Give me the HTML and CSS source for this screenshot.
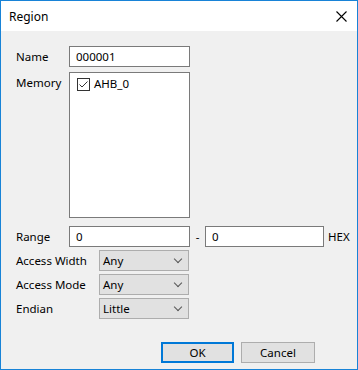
FILE: index.html
```html
<!DOCTYPE html>
<html lang="en">

<head>
    <meta charset="UTF-8">
    <title>Region</title>
    <link rel="stylesheet" href="styles.css">
</head>

<body>
    <div class="dialog">
        <div class="titlebar">
            <span class="title">Region</span>
            <svg class="close" width="11" height="11" viewBox="0 0 11 11">
                <path d="M0.5 0.5 L10.5 10.5 M10.5 0.5 L0.5 10.5" stroke="#000" stroke-width="1.1" fill="none"/>
            </svg>
        </div>
        <div class="content">
            <div class="row">
                <label class="lbl">Name</label>
                <div class="field name">000001</div>
            </div>
            <div class="row row-memory">
                <label class="lbl lbl-top">Memory</label>
                <div class="field listbox">
                    <div class="item">
                        <svg class="check" width="13" height="13" viewBox="0 0 13 13">
                            <rect x="0.5" y="0.5" width="12" height="12" fill="#fff" stroke="#333"/>
                            <path d="M2.5 6.5 L5 9 L10.5 3.5" stroke="#333" stroke-width="1" fill="none"/>
                        </svg>
                        <span>AHB_0</span>
                    </div>
                </div>
            </div>
            <div class="row row-range">
                <label class="lbl">Range</label>
                <div class="field range">0</div>
                <span class="dash">-</span>
                <div class="field range2">0</div>
                <span class="hex">HEX</span>
            </div>
            <div class="row row-combo">
                <label class="lbl lbl-wide">Access Width</label>
                <div class="combo">Any<span class="chev"></span></div>
            </div>
            <div class="row row-combo">
                <label class="lbl lbl-wide">Access Mode</label>
                <div class="combo">Any<span class="chev"></span></div>
            </div>
            <div class="row row-combo">
                <label class="lbl lbl-wide">Endian</label>
                <div class="combo">Little<span class="chev"></span></div>
            </div>
            <div class="buttons">
                <div class="btn btn-ok">OK</div>
                <div class="btn">Cancel</div>
            </div>
        </div>
    </div>
</body>

</html>
```

FILE: styles.css
```css
* {
    padding: 0;
    margin: 0;
    box-sizing: border-box;
}

body {
    font-family: "Noto Sans", "Liberation Sans", sans-serif;
    font-size: 11.5px;
    color: #000;
    background: #f0f0f0;
}

.dialog {
    width: 358px;
    height: 370px;
    border: 1px solid #1883d7;
    background: #f0f0f0;
    display: flex;
    flex-direction: column;
}

.titlebar {
    height: 30px;
    background: #fff;
    display: flex;
    align-items: center;
    justify-content: space-between;
    padding: 0 10px 0 8px;
}

.title {
    font-size: 12px;
}

.close {
    display: block;
}

.content {
    padding: 15px 0 0 15px;
    display: flex;
    flex-direction: column;
}

.row {
    display: flex;
    align-items: center;
    height: 21px;
}

.row-memory {
    margin-top: 5px;
    height: 146px;
    align-items: flex-start;
}

.row-range {
    margin-top: 8px;
}

.row-combo {
    margin-top: 3px;
}

.lbl {
    width: 53px;
    line-height: 21px;
}

.lbl-top {
    line-height: 16px;
    padding-top: 3px;
}

.lbl-wide {
    width: 83px;
}

.field {
    background: #fff;
    border: 1px solid #7a7a7a;
    height: 21px;
    line-height: 19px;
    padding-left: 6px;
}

.name,
.range,
.listbox {
    width: 121px;
}

.listbox {
    height: 146px;
    padding: 4px 0 0 7px;
}

.item {
    display: flex;
    align-items: center;
    gap: 4px;
    line-height: 14px;
}

.check {
    display: block;
}

.dash {
    width: 15px;
    text-align: center;
}

.range2 {
    width: 119px;
}

.hex {
    margin-left: 4px;
}

.combo {
    width: 90px;
    height: 21px;
    background: #e1e1e1;
    border: 1px solid #adadad;
    line-height: 19px;
    padding-left: 3px;
    position: relative;
}

.chev {
    position: absolute;
    right: 7px;
    top: 5px;
    width: 6px;
    height: 6px;
    border-right: 1px solid #555;
    border-bottom: 1px solid #555;
    transform: rotate(45deg);
}

.buttons {
    display: flex;
    justify-content: flex-end;
    gap: 7px;
    margin-top: 23px;
    padding-right: 42px;
}

.btn {
    width: 74px;
    height: 21px;
    background: #e1e1e1;
    border: 1px solid #adadad;
    text-align: center;
    line-height: 19px;
}

.btn-ok {
    width: 73px;
    border: 2px solid #0078d7;
    line-height: 17px;
}
```
